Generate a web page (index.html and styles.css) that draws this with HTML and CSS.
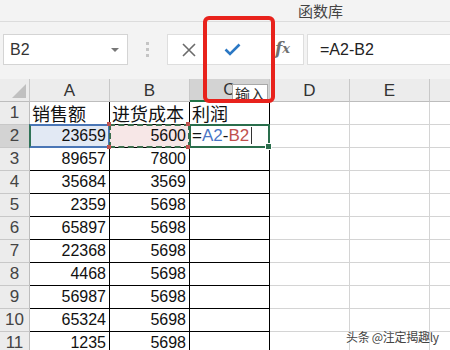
FILE: index.html
```html
<!DOCTYPE html>
<html lang="zh-CN">
<head>
    <meta charset="UTF-8">
    <title>公式输入</title>
    <link rel="stylesheet" href="styles.css">
</head>
<body>
    <div class="ribbon">
        <span class="group-label">函数库</span>
    </div>

    <div class="formula-bar">
        <div class="name-box">
            <span>B2</span>
            <span class="drop-arrow"></span>
        </div>
        <div class="grip"><i></i><i></i><i></i></div>
        <div class="fx-buttons">
            <span class="fx-btn">
                <svg width="14" height="14" viewBox="0 0 14 14"><path d="M1 1 L13 13 M13 1 L1 13" stroke="#6b6b6b" stroke-width="1.6" fill="none"/></svg>
            </span>
            <span class="fx-btn">
                <svg width="17" height="13" viewBox="0 0 17 13"><path d="M1.5 6.5 L6 11 L15.5 1.5" stroke="#2b78c4" stroke-width="2.6" fill="none"/></svg>
            </span>
            <span class="fx-btn fx-label">f<sub>x</sub></span>
        </div>
        <div class="formula-input">=A2-B2</div>
    </div>

    <div class="sheet">
        <table class="grid">
            <colgroup>
                <col class="col-head">
                <col class="col"><col class="col"><col class="col"><col class="col"><col class="col"><col class="col">
            </colgroup>
            <thead>
                <tr class="head-row">
                    <th class="corner"><span class="corner-mark"></span></th>
                    <th>A</th><th>B</th><th class="head-active">C</th><th>D</th><th>E</th><th></th>
                </tr>
            </thead>
            <tbody id="rows">
                <tr>
                    <th class="row-head">1</th>
                    <td class="tbl cjk">销售额</td><td class="tbl cjk">进货成本</td><td class="tbl cjk">利润</td><td></td><td></td><td></td>
                </tr>
                <tr>
                    <th class="row-head head-active-row">2</th>
                    <td class="tbl num ref-a">23659</td>
                    <td class="tbl num ref-b">5600</td>
                    <td class="tbl editing">=<span class="tok-a">A2</span>-<span class="tok-b">B2</span><span class="text-caret"></span></td>
                    <td></td><td></td><td></td>
                </tr>
            </tbody>
        </table>
    </div>

    <div class="callout"></div>
    <div class="tooltip">输入</div>
    <div class="watermark">头条 @注定揭趣ly</div>

    <script>
        // rows 3 to 11: sales and cost columns
        const data = [
            [89657, 7800], [35684, 3569], [2359, 5698], [65897, 5698],
            [22368, 5698], [4468, 5698], [56987, 5698], [65324, 5698], [1235, 5698]
        ];
        const rows = document.getElementById('rows');
        data.forEach((pair, i) => {
            const tr = document.createElement('tr');
            tr.innerHTML = `<th class="row-head">${i + 3}</th>` +
                `<td class="tbl num">${pair[0]}</td><td class="tbl num">${pair[1]}</td><td class="tbl"></td>` +
                '<td></td><td></td><td></td>';
            rows.appendChild(tr);
        });
    </script>
</body>
</html>
```

FILE: styles.css
```css
body {
    margin: 0;
    width: 450px;
    height: 350px;
    overflow: hidden;
    position: relative;
    background-color: #fff;
    font-family: "Liberation Sans", "Noto Sans CJK SC", sans-serif;
}
.ribbon {
    height: 22px;
    background-color: #f3f3f3;
    border-bottom: 1px solid #dcdcdc;
    box-sizing: border-box;
    padding-left: 298px;
}
.group-label {
    font-family: "Noto Sans CJK SC", sans-serif;
    font-size: 15px;
    line-height: 21px;
    color: #444;
}
.formula-bar {
    display: flex;
    height: 57px;
    box-sizing: border-box;
    padding: 12px 0 0 3px;
    background-color: #f3f3f3;
}
.name-box {
    width: 125px;
    height: 31px;
    box-sizing: border-box;
    background-color: #fff;
    border: 1px solid #d4d4d4;
    display: flex;
    align-items: center;
    justify-content: space-between;
    padding: 0 8px 0 6px;
    font-size: 16px;
    color: #333;
}
.drop-arrow {
    width: 0;
    height: 0;
    border-left: 4px solid transparent;
    border-right: 4px solid transparent;
    border-top: 4px solid #777;
}
.grip {
    width: 39px;
    height: 31px;
    display: flex;
    flex-direction: column;
    align-items: center;
    justify-content: center;
    gap: 3px;
}
.grip i {
    width: 3px;
    height: 3px;
    background-color: #c4c4c4;
}
.fx-buttons {
    width: 137px;
    height: 31px;
    box-sizing: border-box;
    background-color: #fff;
    border: 1px solid #dedede;
    display: flex;
}
.fx-btn {
    width: 44px;
    display: flex;
    align-items: center;
    justify-content: center;
}
.fx-btn:first-child {
    width: 42px;
}
.fx-label {
    width: 49px;
    font-family: "DejaVu Serif", serif;
    font-style: italic;
    font-weight: bold;
    font-size: 17px;
    color: #707070;
    padding: 0 0 3px 8px;
    box-sizing: border-box;
}
.fx-label sub {
    font-size: 13px;
    vertical-align: -3px;
}
.formula-input {
    flex: 1;
    margin-left: 3px;
    height: 31px;
    box-sizing: border-box;
    background-color: #fff;
    border: 1px solid #dedede;
    border-right: none;
    padding-left: 12px;
    font-size: 16px;
    line-height: 29px;
    color: #222;
}

/* sheet grid */
.grid {
    table-layout: fixed;
    border-collapse: separate;
    border-spacing: 0;
    width: 510px;
}
.col-head {
    width: 30px;
}
.col {
    width: 80px;
}
.grid th,
.grid td {
    padding: 0;
    box-sizing: border-box;
    border-right: 1px solid #d4d4d4;
    border-bottom: 1px solid #d4d4d4;
    white-space: nowrap;
    overflow: visible;
}
.head-row {
    height: 22px;
}
.head-row th {
    background-color: #ececec;
    border-right-color: #c8c8c8;
    border-bottom-color: #bdbdbd;
    font-weight: normal;
    font-size: 17px;
    color: #333;
    text-align: center;
    line-height: 21px;
}
.head-row .head-active {
    background-color: #d3d3d3;
    border-bottom: 2px solid #217346;
}
.corner {
    position: relative;
}
.corner-mark {
    position: absolute;
    right: 3px;
    bottom: 3px;
    width: 0;
    height: 0;
    border-left: 14px solid transparent;
    border-bottom: 14px solid #c0c0c0;
}
.grid tbody tr {
    height: 23px;
}
.row-head {
    background-color: #ececec;
    border-right-color: #bdbdbd !important;
    border-bottom-color: #c8c8c8 !important;
    font-weight: normal;
    font-size: 17px;
    color: #444;
    text-align: center;
}
.head-active-row {
    background-color: #d3d3d3;
}
.grid td {
    font-size: 16px;
    color: #111;
    line-height: 22px;
}
.grid td.tbl {
    border-right-color: #000;
    border-bottom-color: #000;
}
.num {
    text-align: right;
    padding-right: 3px !important;
}
.cjk {
    font-family: "Noto Sans CJK SC", sans-serif;
    font-size: 18px !important;
    padding-left: 2px !important;
    vertical-align: bottom;
    line-height: 22px;
}
.ref-a,
.ref-b,
.editing {
    position: relative;
}
.ref-a {
    background-color: #e2e9f4;
}
.ref-a::after {
    content: "";
    position: absolute;
    top: -1px;
    left: -1px;
    right: -1px;
    bottom: -1px;
    border: 2px solid #4a76b6;
    border-left-color: #2f7357;
}
.ref-b {
    background-color: #f7e7e7;
}
.ref-b::after {
    content: "";
    position: absolute;
    top: -1px;
    left: -1px;
    right: -1px;
    bottom: -1px;
    border: 2px dashed #3c6e4e;
}
.ref-b::before {
    content: "";
    position: absolute;
    top: -3px;
    left: -3px;
    width: 4px;
    height: 4px;
    background-color: #c0504d;
    box-shadow: 79px 0 0 #c0504d, 0 23px 0 #c0504d, 79px 23px 0 #c0504d;
    z-index: 1;
}
.editing {
    padding-left: 2px !important;
    font-size: 17px !important;
    color: #222;
}
.editing::after {
    content: "";
    position: absolute;
    top: -1px;
    left: -1px;
    right: -1px;
    bottom: -1px;
    border: 2px solid #2a6e4c;
}
.editing::before {
    content: "";
    position: absolute;
    right: -3px;
    bottom: -3px;
    width: 5px;
    height: 5px;
    background-color: #2a6e4c;
    border: 1px solid #fff;
    z-index: 1;
}
.tok-a {
    color: #4a76c6;
}
.tok-b {
    color: #c0504d;
}
.text-caret {
    display: inline-block;
    width: 1px;
    height: 17px;
    margin-left: 2px;
    vertical-align: -3px;
    background-color: #333;
}

/* overlays */
.callout {
    position: absolute;
    left: 203px;
    top: 16px;
    width: 72px;
    height: 87px;
    box-sizing: border-box;
    border: 4px solid #e8221c;
    border-radius: 6px;
    z-index: 3;
}
.tooltip {
    position: absolute;
    left: 232px;
    top: 84px;
    padding: 0 2px;
    height: 19px;
    box-sizing: border-box;
    background-color: #fff;
    border: 1px solid #a8a8a8;
    font-family: "Noto Sans CJK SC", sans-serif;
    font-size: 15px;
    line-height: 17px;
    color: #333;
    z-index: 2;
}
.watermark {
    position: absolute;
    left: 346px;
    top: 328px;
    white-space: nowrap;
    font-family: "Noto Sans CJK SC", sans-serif;
    font-size: 12px;
    letter-spacing: -0.3px;
    color: #444;
    text-shadow: 0 0 2px #fff;
    z-index: 2;
}
```
